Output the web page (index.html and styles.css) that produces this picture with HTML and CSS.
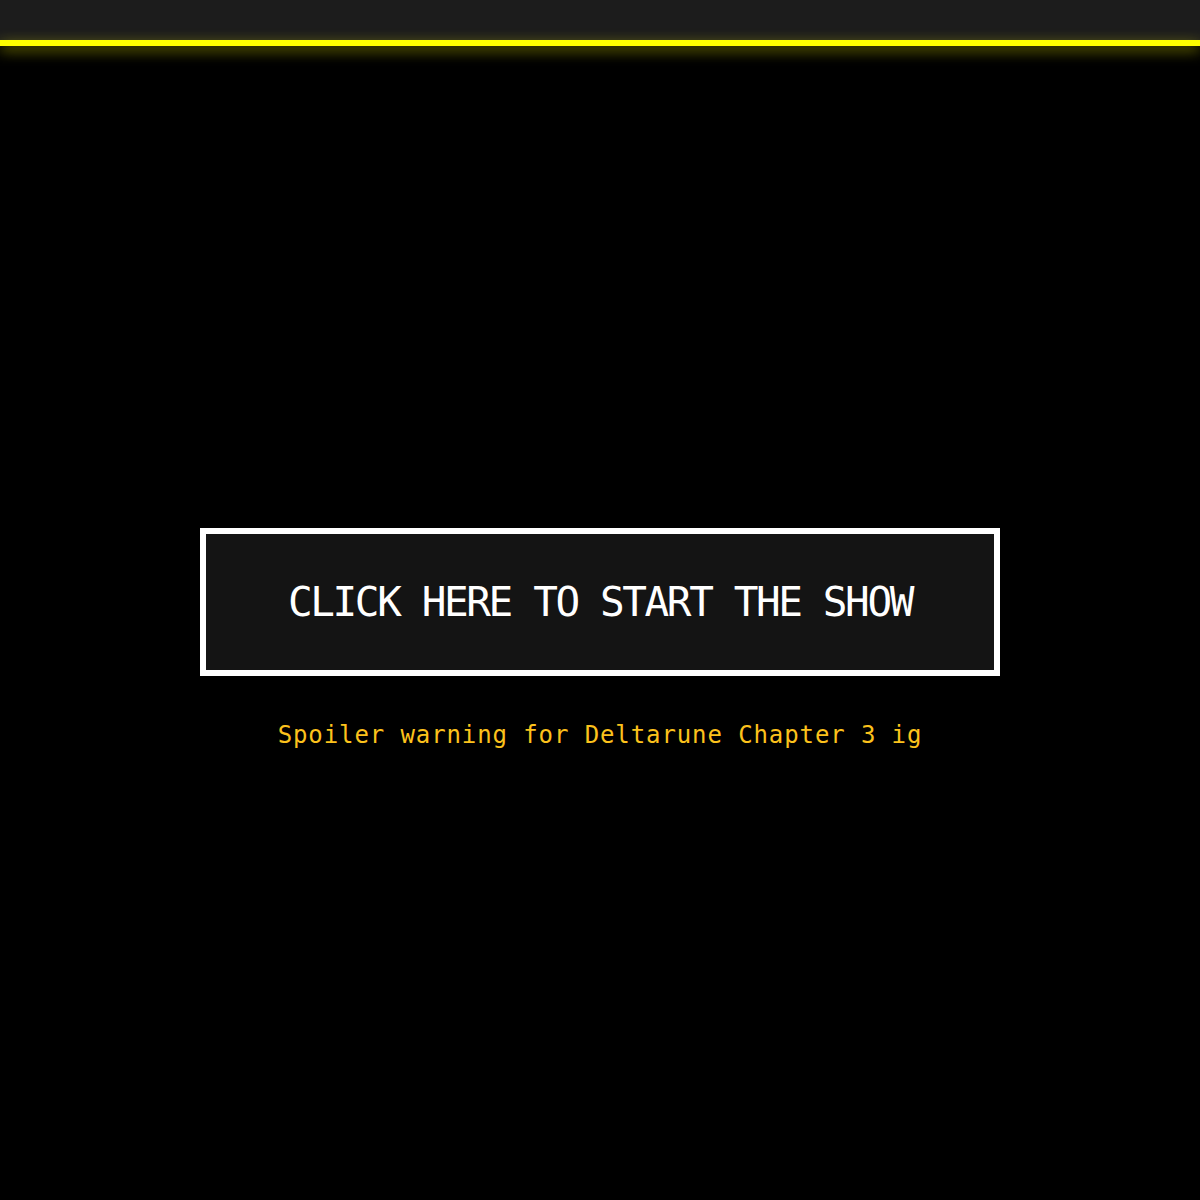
FILE: index.html
```html
<!DOCTYPE html>
<html lang="en">
<head>
    <meta charset="UTF-8">
    <meta name="viewport" content="width=device-width, initial-scale=1.0">
    <title>Start the Show</title>
    <link rel="stylesheet" href="styles.css">
</head>
<body>
    <div class="topbar"></div>
    <div class="glow-line"></div>
    <main class="stage">
        <button class="start-button" id="startShow">CLICK HERE TO START THE SHOW</button>
        <p class="spoiler">Spoiler warning for Deltarune Chapter 3 ig</p>
    </main>
</body>
</html>
```

FILE: styles.css
```css
html, body {
    margin: 0;
    padding: 0;
    background: #000;
}

body {
    font-family: "DejaVu Sans Mono", "Liberation Mono", monospace;
    height: 1200px;
    overflow: hidden;
}

.topbar {
    height: 40px;
    background-color: #1c1c1c;
}

.glow-line {
    height: 6px;
    background-color: #ffff00;
    box-shadow: 0 4px 14px rgba(255, 255, 0, 0.55);
    position: relative;
    z-index: 1;
}

.stage {
    display: flex;
    flex-direction: column;
    align-items: center;
    padding-top: 482px;
}

.start-button {
    width: 800px;
    height: 148px;
    box-sizing: border-box;
    border: 6px solid #fff;
    background-color: #141414;
    color: #fff;
    font-family: inherit;
    font-size: 41px;
    letter-spacing: -2.4px;
    padding: 0;
    cursor: pointer;
}

.spoiler {
    margin: 44px 0 0;
    color: #fcc21c;
    font-size: 24px;
    letter-spacing: 0.9px;
    line-height: 30px;
}
```
